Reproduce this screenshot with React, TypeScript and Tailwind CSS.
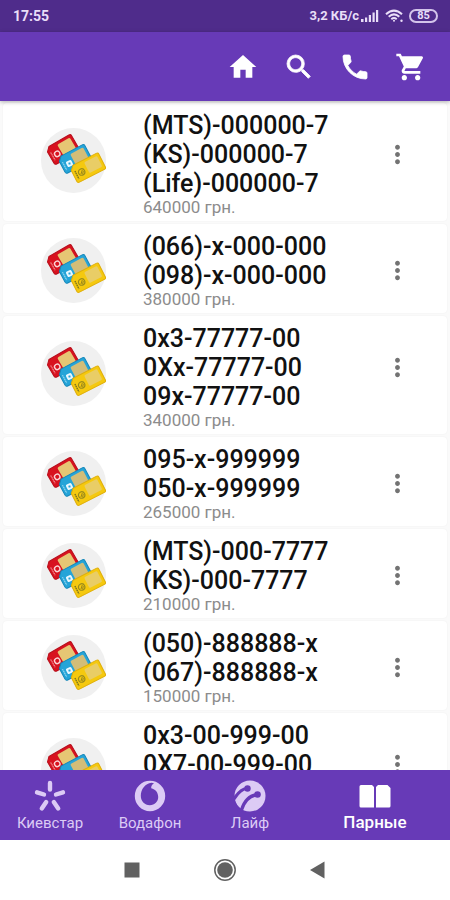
import type { ReactNode } from "react";
import { MdHome, MdSearch, MdShoppingCart, MdMoreVert } from "react-icons/md";

type Offer = { lines: string[]; price?: string; tall?: boolean };

const offers: Offer[] = [
  { lines: ["(MTS)-000000-7", "(KS)-000000-7", "(Life)-000000-7"], price: "640000 грн.", tall: true },
  { lines: ["(066)-x-000-000", "(098)-x-000-000"], price: "380000 грн." },
  { lines: ["0x3-77777-00", "0Xx-77777-00", "09x-77777-00"], price: "340000 грн.", tall: true },
  { lines: ["095-x-999999", "050-x-999999"], price: "265000 грн." },
  { lines: ["(MTS)-000-7777", "(KS)-000-7777"], price: "210000 грн." },
  { lines: ["(050)-888888-x", "(067)-888888-x"], price: "150000 грн." },
  { lines: ["0x3-00-999-00", "0X7-00-999-00"], tall: true },
];

function SimCard({ x, y, w, h, angle, fill, edge, chip, children }: {
  x: number; y: number; w: number; h: number; angle: number;
  fill: string; edge: string; chip: string; children: ReactNode;
}) {
  return (
    <g transform={`translate(${x} ${y}) rotate(${angle})`}>
      <path
        d={`M4 0H${w - 2}Q${w} 0 ${w} 2V${h - 2}Q${w} ${h} ${w - 2} ${h}H2Q0 ${h} 0 ${h - 2}V4Z`}
        fill={fill}
        stroke={edge}
        strokeWidth="1"
        strokeLinejoin="round"
      />
      <rect x={w - 17} y="2.5" width="14.5" height={h - 6} rx="1.5" fill={chip} />
      {children}
    </g>
  );
}

function SimCards() {
  return (
    <svg viewBox="0 0 65 65" className="size-[65px] shrink-0" aria-hidden="true">
      <circle cx="32.5" cy="32.5" r="32.5" fill="#f0f0f0" />
      <SimCard x={4.5} y={20.5} w={29} h={19} angle={-30} fill="#d8121f" edge="#b80f1b" chip="#e6c674">
        <circle cx="7.5" cy="10.5" r="2.7" fill="none" stroke="#fbd5d7" strokeWidth="1.4" />
        <path d="M2.5 6V15" stroke="#f5a9ad" strokeWidth="1" strokeDasharray="1.5 .6" />
      </SimCard>
      <SimCard x={16.5} y={30} w={30} h={18} angle={-28} fill="#25a4d8" edge="#1687b9" chip="#d2bd78">
        <rect x="5" y="7.5" width="6" height="6" rx="1.5" fill="#eaf8ff" />
        <path d="M7 9.5l2 2m0-2l-2 2" stroke="#25a4d8" strokeWidth=".8" />
        <path d="M2.5 6V15" stroke="#a8def3" strokeWidth="1" strokeDasharray="1.5 .6" />
      </SimCard>
      <SimCard x={28.5} y={39} w={32} h={18} angle={-27} fill="#f5c90f" edge="#dfae0a" chip="#e9cd66">
        <circle cx="8.5" cy="10" r="3.2" fill="none" stroke="#9a8b1c" strokeWidth="1.2" />
        <path d="M7 11.5L10 8.5M8.5 12L10.5 10" stroke="#8a7d20" strokeWidth=".8" />
        <path d="M3 6V15" stroke="#77701f" strokeWidth="1.3" strokeDasharray="1.6 .5" />
      </SimCard>
    </svg>
  );
}

function OfferRow({ lines, price, tall }: Offer) {
  return (
    <li
      className={`mx-[3px] flex shrink-0 items-center rounded-sm bg-white pt-2 pr-[35px] pb-1 pl-[38px] shadow-[0_0_2px_rgba(0,0,0,0.06)] ${tall ? "min-h-[118px]" : ""}`}
    >
      <div className={tall ? "pb-2" : ""}>
        <SimCards />
      </div>
      <div className="ml-[37px] flex-1 self-start">
        <h2 className="text-[25px] leading-[29px] font-medium text-[#111111]">
          {lines.map((line) => (
            <span key={line} className="block">{line}</span>
          ))}
        </h2>
        {price && <p className="text-[17px] leading-[19px] text-[#8c8c8c]">{price}</p>}
      </div>
      <button type="button" aria-label="Меню" className={tall ? "pb-5 text-[#737373]" : "text-[#737373]"}>
        <MdMoreVert size={29} />
      </button>
    </li>
  );
}

function PhoneIcon({ size }: { size: number }) {
  return (
    <svg viewBox="0 0 24 24" width={size} height={size} fill="currentColor" aria-hidden="true">
      <path d="M6.620 10.790c1.440 2.830 3.760 5.140 6.590 6.590l2.200-2.200c.27-.27.67-.36 1.020-.24 1.120.37 2.330.57 3.570.57.55 0 1 .45 1 1V20c0 .55-.45 1-1 1-9.390 0-17-7.610-17-17 0-.55.45-1 1-1h3.500c.55 0 1 .45 1 1 0 1.250.2 2.450.57 3.570.11.35.03.74-.25 1.020l-2.200 2.200z" />
    </svg>
  );
}

function KyivstarIcon() {
  return (
    <svg viewBox="0 0 32 32" className="size-8" fill="none" stroke="currentColor" strokeWidth="4.4" strokeLinecap="round" aria-hidden="true">
      <path d="M16 3V9.500M22 14.500L29 12.300M19.800 22L24.200 28.500M12.200 22L7.800 28.500M10 14.500L3 12.300" />
    </svg>
  );
}

function VodafoneIcon() {
  return (
    <svg viewBox="0 0 32 32" className="size-8" aria-hidden="true">
      <path
        fill="currentColor"
        fillRule="evenodd"
        d="M16 .8a15.200 15.200 0 1 0 0 30.400A15.200 15.200 0 0 0 16 .8ZM17.500 2.800C11 3.500 6.800 9.500 6.800 15.800C6.800 21 10.500 25.200 15.800 25.200C20.800 25.200 24.200 21.500 24.200 17C24.200 12.500 21.500 9.300 17.200 8.200C17 6.500 18 4.500 20 3.600Q19 2.800 17.500 2.800Z"
      />
    </svg>
  );
}

function LifeIcon() {
  return (
    <svg viewBox="0 0 32 32" className="size-8" aria-hidden="true">
      <circle cx="16" cy="16" r="15.500" fill="currentColor" />
      <g fill="none" stroke="#673ab7" strokeWidth="3.200" strokeLinecap="round">
        <path d="M13.500 8.500C8.500 8.500 4 12.500 0 19" />
        <path d="M23.500 14.500C15.500 15.500 10.500 20 7.500 30" />
      </g>
      <circle cx="13.500" cy="8.500" r="3.200" fill="#673ab7" />
      <circle cx="23.500" cy="14.500" r="3.300" fill="#673ab7" />
      <path d="M0 17C1.500 23 3 27 9 32H0Z" fill="#673ab7" />
    </svg>
  );
}

function PairIcon() {
  return (
    <svg viewBox="0 0 32 32" className="size-8" fill="currentColor" aria-hidden="true">
      <path d="M2 5H13L15 7V27.500H2Q.5 27.500 .5 26V6.500Q.5 5 2 5ZM19 5H28.500L31.500 8V26Q31.500 27.500 30 27.500H17V7Z" />
    </svg>
  );
}

function StatusBar() {
  return (
    <div className="flex h-8 shrink-0 items-center bg-[#4f2c8b] pr-3 pl-[13px] text-[#e9def8]">
      <span className="flex-1 text-[14px] leading-4 font-bold">17:55</span>
      <span className="text-[13px] leading-4 font-bold">3,2 КБ/с</span>
      <svg viewBox="0 0 19 14" className="ml-px h-[14px] w-[19px]" fill="currentColor" aria-hidden="true">
        <path d="M1 10h2.500v3H1zM5 8.500h2.200V13H5zM8.800 6H11v7H8.800zM12.500 3.500h2.200V13h-2.200zM16 1h2.200v12H16z" />
      </svg>
      <svg viewBox="0 0 20 14" className="ml-[6px] h-[14px] w-5" fill="none" stroke="currentColor" strokeWidth="2" aria-hidden="true">
        <path d="M1 5.200Q9 -2 17 5.200M3.700 7.800Q9 3 14.300 7.800M6.300 10.200Q9 7.800 11.700 10.200" />
        <circle cx="9" cy="11.800" r="1" fill="currentColor" stroke="none" />
        <circle cx="16.500" cy="11.800" r="1.200" fill="currentColor" stroke="none" />
      </svg>
      <span className="ml-1 flex h-[14px] w-[29px] items-center justify-center rounded-full border-2 border-[#d3c4ea] text-[11px] leading-3 font-bold">85</span>
    </div>
  );
}

const actions = [
  { label: "Главная", Icon: MdHome, stroke: "" },
  { label: "Поиск", Icon: MdSearch, stroke: "[&_path:last-child]:stroke-current [&_path:last-child]:stroke-[0.6px]" },
  { label: "Позвонить", Icon: PhoneIcon, stroke: "[&_path:last-child]:stroke-current [&_path:last-child]:stroke-[0.6px]" },
  { label: "Корзина", Icon: MdShoppingCart, stroke: "" },
];

const tabs = [
  { label: "Киевстар", Icon: KyivstarIcon },
  { label: "Водафон", Icon: VodafoneIcon },
  { label: "Лайф", Icon: LifeIcon },
];

export default function App() {
  return (
    <div className="flex h-screen flex-col overflow-hidden bg-[#fafafa] font-['Roboto','Noto_Sans',sans-serif]">
      <StatusBar />
      <header className="z-10 flex h-[69px] shrink-0 items-center justify-end gap-6 bg-[#673ab7] pr-[23px] text-white shadow-[0_1px_4px_rgba(0,0,0,0.3)]">
        {actions.map(({ label, Icon, stroke }) => (
          <button key={label} type="button" aria-label={label} className={stroke}>
            <Icon size={32} />
          </button>
        ))}
      </header>
      <main className="min-h-0 flex-1 overflow-hidden">
        <ul className="flex flex-col gap-[3px] pt-[2px]">
          {offers.map((offer) => (
            <OfferRow key={offer.lines[0]} {...offer} />
          ))}
        </ul>
      </main>
      <nav className="flex h-[70px] shrink-0 bg-[#673ab7] text-[#dccbf5]">
        {tabs.map(({ label, Icon }) => (
          <button key={label} type="button" className="flex flex-2 flex-col items-center pt-[10px]">
            <Icon />
            <span className="mt-[2px] text-[15px] leading-[18px]">{label}</span>
          </button>
        ))}
        <button type="button" aria-current="page" className="flex flex-3 flex-col items-center pt-[10px] text-white">
          <PairIcon />
          <span className="text-[17px] leading-5 font-medium">Парные</span>
        </button>
      </nav>
      <div className="flex h-[60px] shrink-0 items-center justify-center gap-[69px] bg-white text-[#616161]">
        <button type="button" aria-label="Недавние">
          <svg viewBox="0 0 24 24" className="size-6" fill="currentColor" aria-hidden="true">
            <rect x="4.500" y="4.500" width="15" height="15" />
          </svg>
        </button>
        <button type="button" aria-label="Домой">
          <svg viewBox="0 0 24 24" className="size-6" aria-hidden="true">
            <circle cx="12" cy="12" r="10.200" fill="none" stroke="currentColor" strokeWidth="1.500" />
            <circle cx="12" cy="12" r="7.800" fill="currentColor" />
          </svg>
        </button>
        <button type="button" aria-label="Назад">
          <svg viewBox="0 0 24 24" className="size-6" fill="currentColor" aria-hidden="true">
            <path d="M18.500 3.500V20.500L4 12Z" />
          </svg>
        </button>
      </div>
    </div>
  );
}
